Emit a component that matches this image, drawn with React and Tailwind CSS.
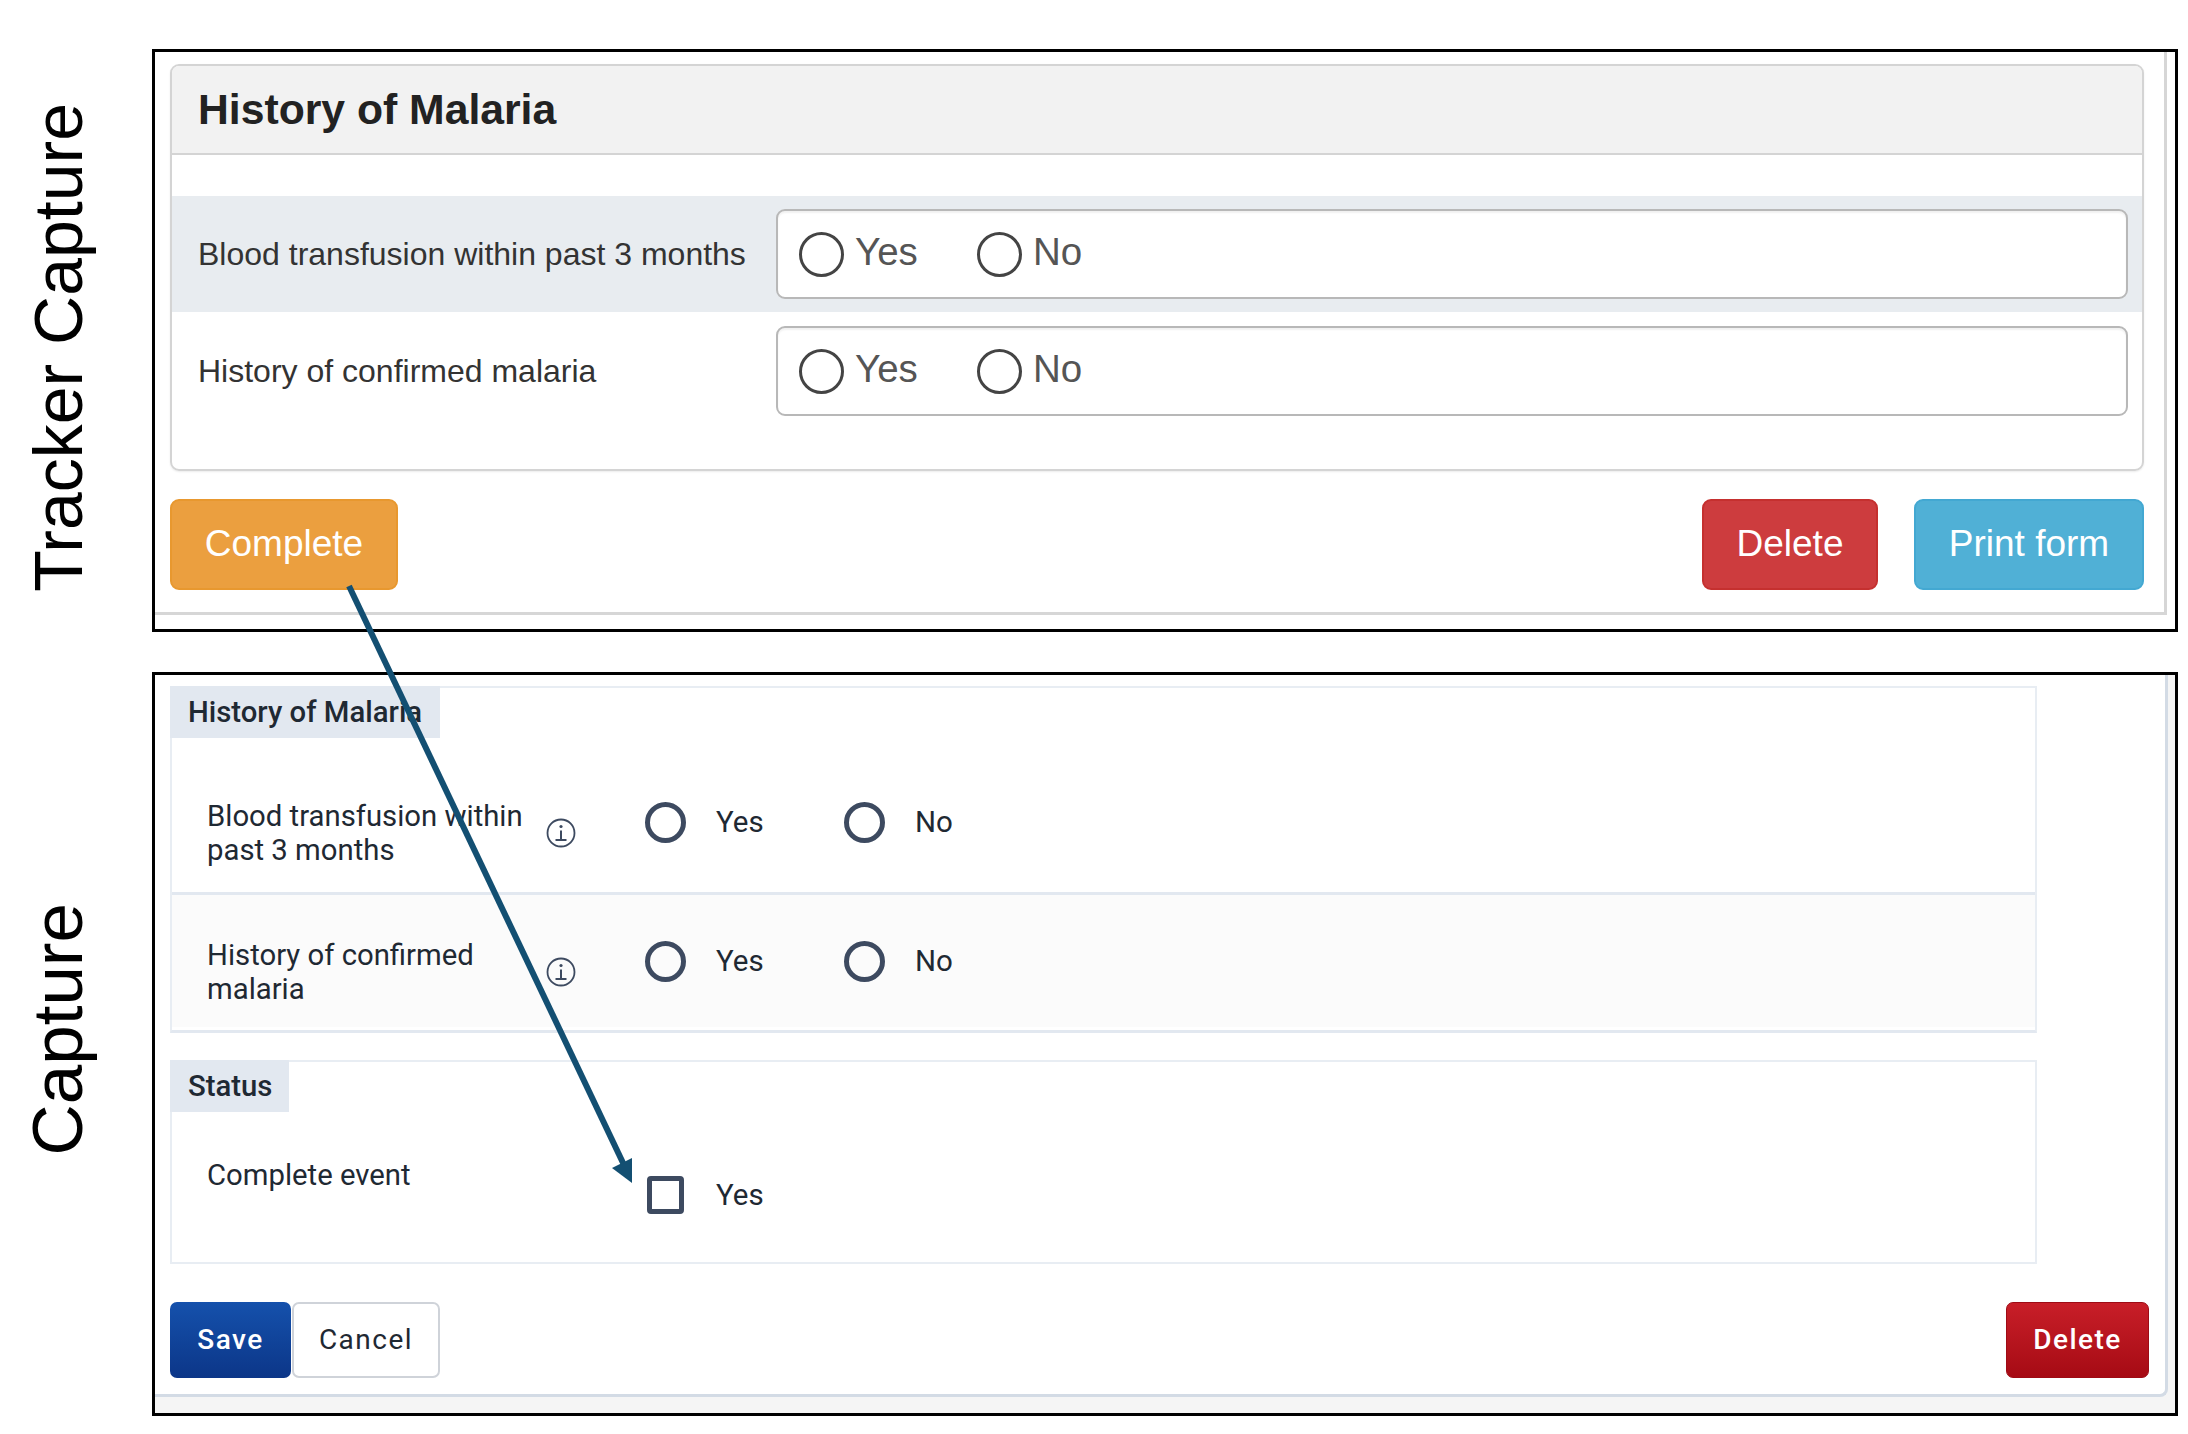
const arial = "font-['Liberation_Sans',Arial,sans-serif]";
const roboto = "font-['Roboto',sans-serif]";

function TopRadio({ label, className }) {
  return (
    <div className={`flex items-center ${className}`}>
      <span className="w-[45px] h-[45px] rounded-full border-[3px] border-[#444] bg-white shrink-0" />
      <span className="ml-[11px] text-[38.5px] leading-[45px] text-[#555] -translate-y-[3px]">{label}</span>
    </div>
  );
}

function TopRow({ label, className }) {
  return (
    <div className={`flex items-center ${className}`}>
      <div className="w-[604px] pl-[26px] text-[32px] leading-none text-[#333] shrink-0">{label}</div>
      <div className="w-[1352px] h-[90px] rounded-[9px] border-2 border-[#b8b8b8] bg-white flex items-center pl-[21px] shadow-[inset_0_2px_2px_rgba(0,0,0,0.06)]">
        <TopRadio label="Yes" className="w-[178px]" />
        <TopRadio label="No" className="" />
      </div>
    </div>
  );
}

function TopButton({ children, className }) {
  return (
    <div className={`h-[91px] rounded-[9px] border-2 flex items-center justify-center text-white text-[37px] pb-[2px] ${className}`}>
      {children}
    </div>
  );
}

function InfoIcon() {
  return (
    <svg width="30" height="30" viewBox="0 0 30 30" fill="none" stroke="#3d4a60" className="shrink-0">
      <circle cx="15" cy="15" r="13.5" strokeWidth="1.8" />
      <circle cx="15" cy="8.5" r="1.6" fill="#3d4a60" stroke="none" />
      <path d="M15 12.5V21.5" strokeWidth="2" />
      <path d="M9.5 22H20.5" strokeWidth="2" />
    </svg>
  );
}

function BottomRadio({ label, className }) {
  return (
    <div className={`flex items-center ${className}`}>
      <span className="w-[41px] h-[41px] rounded-full border-[5px] border-[#3d4a60] shrink-0" />
      <span className="ml-[30px] text-[29.5px] leading-[41px] text-[#1f2933]">{label}</span>
    </div>
  );
}

function BottomRow({ lines, className }) {
  return (
    <div className={`flex items-start pl-[35px] ${className}`}>
      <div className="w-[339px] text-[29.3px] leading-[34px] text-[#1f2933] shrink-0">
        {lines.map((l) => (
          <div key={l}>{l}</div>
        ))}
      </div>
      <div className="mt-[19px] w-[99px]">
        <InfoIcon />
      </div>
      <div className="mt-[3px] flex">
        <BottomRadio label="Yes" className="w-[199px]" />
        <BottomRadio label="No" />
      </div>
    </div>
  );
}

function SectionTab({ children, className }) {
  return (
    <div className={`h-[52px] bg-[#e2e8f0] flex items-center pl-[18px] text-[29.3px] font-medium text-[#1f2933] ${className}`}>
      {children}
    </div>
  );
}

function Arrow() {
  return (
    <svg className="absolute inset-0 pointer-events-none" width="2188" height="1434" viewBox="0 0 2188 1434" fill="none">
      <path d="M349 586L624 1165" stroke="#134f72" strokeWidth="6" />
      <path d="M632 1183L612 1168L632 1158Z" fill="#134f72" />
    </svg>
  );
}

export default function App() {
  return (
    <div className={`relative w-[2188px] h-[1434px] bg-white flex flex-col pt-[49px] gap-[40px] ${arial}`}>
      {/* Tracker Capture */}
      <div className="flex h-[583px]">
        <div className="w-[152px] shrink-0 flex items-center justify-start pl-[22px]">
          <div className="[writing-mode:vertical-rl] rotate-180 text-[68px] leading-[72px] text-black whitespace-nowrap translate-y-[7px]">
            Tracker Capture
          </div>
        </div>
        <div className="w-[2026px] border-[3px] border-black">
          <div className="w-[2012px] h-[563px] border-r-[3px] border-b-[3px] border-[#d6d6d6] pl-[15px] pt-[12px]">
            <div className="w-[1974px] h-[407px] rounded-[9px] border-2 border-[#d4d4d4] overflow-hidden shadow-[0_1px_2px_rgba(0,0,0,0.08)]">
              <div className="h-[89px] bg-[#f2f2f2] border-b-2 border-[#d4d4d4] flex items-center pl-[26px] text-[42.7px] font-bold text-[#222]">
                History of Malaria
              </div>
              <div className="h-[41px]" />
              <TopRow label="Blood transfusion within past 3 months" className="h-[116px] bg-[#e8ecf0]" />
              <TopRow label="History of confirmed malaria" className="h-[118px]" />
            </div>
            <div className="mt-[28px] w-[1974px] flex">
              <TopButton className="w-[228px] bg-[#eb9f3f] border-[#e8982f]">Complete</TopButton>
              <div className="flex-1" />
              <TopButton className="w-[176px] bg-[#cd3c3e] border-[#c5302f]">Delete</TopButton>
              <TopButton className="w-[230px] ml-[36px] bg-[#50b0d6] border-[#43a8d2]">Print form</TopButton>
            </div>
          </div>
        </div>
      </div>

      {/* Capture */}
      <div className="flex h-[744px]">
        <div className="w-[152px] shrink-0 flex items-center justify-start pl-[22px]">
          <div className="[writing-mode:vertical-rl] rotate-180 text-[71px] leading-[72px] text-black whitespace-nowrap -translate-y-[15px]">
            Capture
          </div>
        </div>
        <div className={`w-[2026px] border-[3px] border-black bg-[#f5f5f5] ${roboto}`}>
          <div className="w-[2013px] h-[722px] bg-white border-r-[3px] border-b-[3px] border-[#d3dbe5] rounded-br-[8px] pl-[15px] pt-[11px]">
            <div className="w-[1867px] h-[347px] border-2 border-[#e8edf3] border-b-[3px] border-b-[#e2e8f0]">
              <SectionTab className="w-[270px] -ml-[2px] -mt-[2px] pt-[2px]">History of Malaria</SectionTab>
              <BottomRow
                lines={["Blood transfusion within", "past 3 months"]}
                className="h-[157px] pt-[61px] border-b-[3px] border-[#e2e8f0]"
              />
              <BottomRow
                lines={["History of confirmed", "malaria"]}
                className="h-[132px] pt-[43px] bg-[#fbfbfb]"
              />
            </div>
            <div className="mt-[27px] w-[1867px] h-[204px] border-2 border-[#e8edf3]">
              <SectionTab className="w-[119px] -ml-[2px] -mt-[2px] pt-[2px]">Status</SectionTab>
              <div className="flex items-start pl-[35px] pt-[46px]">
                <div className="w-[440px] text-[29.3px] leading-[34px] text-[#1f2933] shrink-0">Complete event</div>
                <div className="mt-[18px] flex items-center">
                  <span className="w-[37px] h-[38px] rounded-[4px] border-[5px] border-[#3d4a60]" />
                  <span className="ml-[32px] text-[29.5px] leading-[38px] text-[#1f2933]">Yes</span>
                </div>
              </div>
            </div>
            <div className="mt-[38px] w-[1979px] flex">
              <div className="w-[121px] h-[76px] rounded-[7px] bg-gradient-to-b from-[#1551ac] to-[#0c3688] flex items-center justify-center text-white text-[28px] font-medium tracking-[1.5px]">
                Save
              </div>
              <div className="ml-[1px] w-[148px] h-[76px] rounded-[7px] border-2 border-[#cfd3d9] bg-white flex items-center justify-center text-[#1f2933] text-[28px] tracking-[1.5px]">
                Cancel
              </div>
              <div className="flex-1" />
              <div className="w-[143px] h-[76px] rounded-[7px] border border-[#9e0b15] bg-gradient-to-b from-[#c81e28] to-[#a60a14] flex items-center justify-center text-white text-[28px] font-medium tracking-[1.5px]">
                Delete
              </div>
            </div>
          </div>
        </div>
      </div>

      <Arrow />
    </div>
  );
}
